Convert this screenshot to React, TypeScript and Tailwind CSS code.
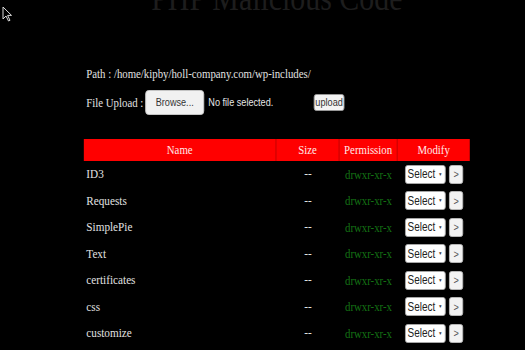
import React from 'react';

const rows = ['ID3', 'Requests', 'SimplePie', 'Text', 'certificates', 'css', 'customize'];

const serif = { fontFamily: '"Liberation Serif", "Times New Roman", serif' };
const sans = { fontFamily: '"Liberation Sans", Arial, sans-serif' };

const Cursor = () => (
  <svg className="absolute left-[2px] top-[6px]" width="10" height="16" viewBox="0 0 10 16">
    <path d="M1 1 L1 13 L4 10 L6.5 15 L8 14.3 L5.6 9.4 L9.5 9.4 Z" fill="#000" stroke="#d8d8d8" strokeWidth="1" />
  </svg>
);

const ModifyCell = () => (
  <div className="flex items-center gap-[4px] pl-[9px]" style={sans}>
    <div className="flex h-[19px] w-[49px] items-center justify-between rounded-[3px] border border-[#aaa] bg-white pl-[2px] pr-[3px] text-[12px] text-[#222]">
      <span>Select</span>
      <span className="text-[5px] text-[#333]">▼</span>
    </div>
    <div className="flex h-[19px] w-[17px] items-center justify-center rounded-[3px] border border-[#bbb] bg-[#f2f2f2] text-[11px] text-[#555]">
      &gt;
    </div>
  </div>
);

export default function App() {
  return (
    <div className="relative h-[350px] w-[525px] overflow-hidden bg-black">
      <div className="w-[633px] origin-top-left scale-x-[0.83]" style={serif}>
        <div className="pl-[101px]">
          <div className="w-[465px]">
            <h1 className="mt-[-20px] text-center text-[36px] leading-[36px] font-normal text-[#1d1d1d]">
              PHP Malicious Code
            </h1>

            <div className="mt-[49px] pl-[3px] text-[13px] leading-[18px] text-[#e2e2e2]">
              Path : /home/kipby/holl-company.com/wp-includes/
            </div>

            <div className="mt-[7px] flex h-[25px] items-center pl-[3px] text-[13px] text-[#e2e2e2]">
              <span className="w-[71px]">File Upload :</span>
              <div
                className="flex h-[25px] w-[71px] items-center justify-center rounded-[4px] border border-[#ccc] bg-[#f1f1f1] text-[11px] text-[#333]"
                style={sans}
              >
                Browse...
              </div>
              <span className="ml-[5px] w-[127px] text-[11px] text-[#e6e6e6]" style={sans}>
                No file selected.
              </span>
              <div
                className="flex h-[17px] w-[37px] items-center justify-center rounded-[3px] border border-[#999] bg-[#f4f4f4] text-[11px] text-[#333]"
                style={sans}
              >
                upload
              </div>
            </div>

            <div className="mt-[24px]">
              <div className="flex h-[22px] bg-[#ff0000] text-[13px] text-[#ffe9e9]">
                <div className="flex w-[232px] items-center justify-center border-r border-[#b80000]">Name</div>
                <div className="flex w-[76px] items-center justify-center border-r border-[#b80000]">Size</div>
                <div className="flex w-[70px] items-center justify-center border-r border-[#b80000]">Permission</div>
                <div className="flex flex-1 items-center justify-center">Modify</div>
              </div>
              {rows.map((name) => (
                <div key={name} className="flex h-[26.5px] items-center text-[13.5px]">
                  <div className="w-[232px] pl-[3px] text-[#e2e2e2]">{name}</div>
                  <div className="w-[76px] text-center text-[#e2e2e2]">--</div>
                  <div className="w-[70px] text-center text-[13px] text-[#147214]">drwxr-xr-x</div>
                  <div className="flex-1">
                    <ModifyCell />
                  </div>
                </div>
              ))}
            </div>
          </div>
        </div>
      </div>
      <Cursor />
    </div>
  );
}
